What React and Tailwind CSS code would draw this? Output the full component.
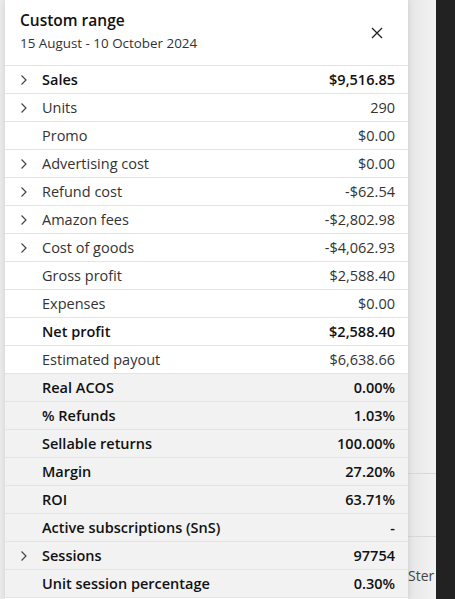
import React from 'react';

const rows = [
  { label: 'Sales', value: '$9,516.85', chevron: true, bold: true },
  { label: 'Units', value: '290', chevron: true },
  { label: 'Promo', value: '$0.00' },
  { label: 'Advertising cost', value: '$0.00', chevron: true },
  { label: 'Refund cost', value: '-$62.54', chevron: true },
  { label: 'Amazon fees', value: '-$2,802.98', chevron: true },
  { label: 'Cost of goods', value: '-$4,062.93', chevron: true },
  { label: 'Gross profit', value: '$2,588.40' },
  { label: 'Expenses', value: '$0.00' },
  { label: 'Net profit', value: '$2,588.40', bold: true },
  { label: 'Estimated payout', value: '$6,638.66' },
  { label: 'Real ACOS', value: '0.00%', gray: true },
  { label: '% Refunds', value: '1.03%', gray: true },
  { label: 'Sellable returns', value: '100.00%', gray: true },
  { label: 'Margin', value: '27.20%', gray: true },
  { label: 'ROI', value: '63.71%', gray: true },
  { label: 'Active subscriptions (SnS)', value: '-', gray: true },
  { label: 'Sessions', value: '97754', gray: true, chevron: true },
  { label: 'Unit session percentage', value: '0.30%', gray: true },
];

const Chevron = () => (
  <svg width="8" height="12" viewBox="0 0 8 12" fill="none" stroke="#444" strokeWidth="1.2">
    <path d="M1.5 1.5 L6 6 L1.5 10.5" />
  </svg>
);

const Row = ({ row }) => {
  const strong = row.bold || row.gray;
  return (
    <div
      className={`flex items-center h-[28px] border-b border-[#e4e4e4] pt-[1px] pl-[15px] pr-[13px] ${
        row.gray ? 'bg-[#f2f2f2]' : 'bg-white'
      }`}
    >
      <div className="w-[22px] flex items-center">{row.chevron && <Chevron />}</div>
      <div
        className={`flex-1 text-[14.5px] ${
          strong ? 'font-semibold text-[#111]' : 'text-[#333]'
        }`}
      >
        {row.label}
      </div>
      <div
        className={`text-[14.5px] ${strong ? 'font-semibold text-[#111]' : 'text-[#333]'}`}
      >
        {row.value}
      </div>
    </div>
  );
};

export default function App() {
  return (
    <div
      className="flex w-[455px] h-[599px] overflow-hidden bg-[#ececec]"
      style={{ fontFamily: '"Open Sans", "Noto Sans", sans-serif' }}
    >
      <div className="w-[5px] bg-[#ebebeb]" />
      <div className="w-[403px] bg-white flex flex-col shadow-[0_0_6px_rgba(0,0,0,0.12)] z-10">
        <div className="h-[66px] flex items-start justify-between border-b border-[#e4e4e4] pl-[15px] pr-[25px] pt-[9px]">
          <div>
            <div className="text-[15.5px] font-semibold text-[#111] leading-[22px]">Custom range</div>
            <div className="text-[13.4px] text-[#333] leading-[22px] mt-[1px]">
              15 August - 10 October 2024
            </div>
          </div>
          <svg width="12" height="12" viewBox="0 0 12 12" className="mt-[18px]" stroke="#222" strokeWidth="1.3">
            <path d="M1 1 L11 11 M11 1 L1 11" />
          </svg>
        </div>
        {rows.map((r) => (
          <Row key={r.label} row={r} />
        ))}
      </div>
      <div className="w-[28px] flex flex-col bg-gradient-to-r from-[#e6e6e6] to-[#f3f3f3]">
        <div className="h-[474px] border-b border-[#d8d8d8]" />
        <div className="h-[63px] border-b border-[#d8d8d8]" />
        <div className="flex-1 pt-[28px] text-[14px] text-[#444] whitespace-nowrap overflow-hidden">
          Ster
        </div>
      </div>
      <div className="flex-1 bg-[#222222]" />
    </div>
  );
}
